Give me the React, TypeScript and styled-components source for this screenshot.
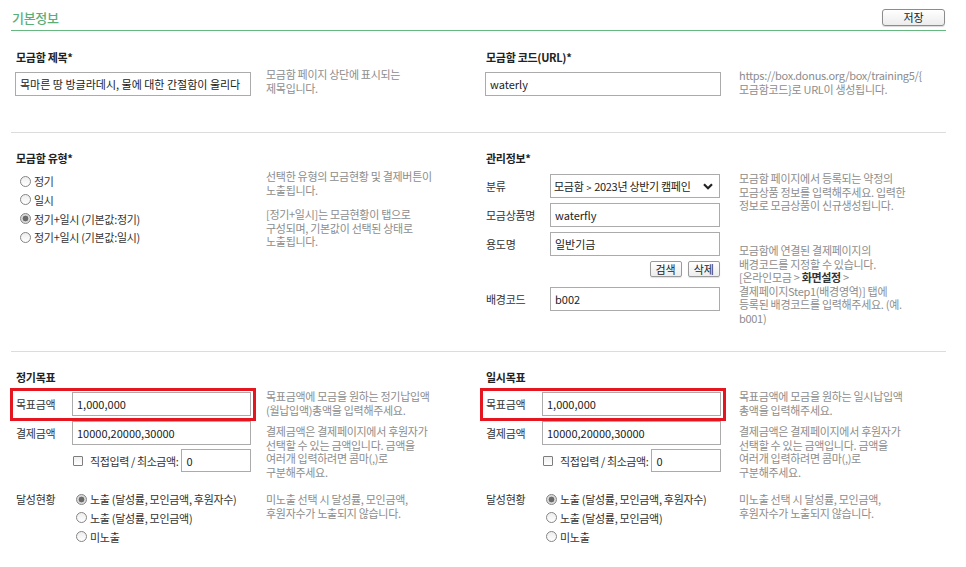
import React from 'react';
import styled, { createGlobalStyle } from 'styled-components';

const GlobalStyle = createGlobalStyle`
  body {
    margin: 0;
    background: #fff;
    font-family: "Noto Sans CJK KR", "Noto Sans", sans-serif;
    font-size: 11px;
    letter-spacing: -0.3px;
    color: #333;
  }
  * { box-sizing: border-box; }
`;

const Page = styled.div`
  width: 935px;
  margin-left: 11px;
`;

const Header = styled.div`
  display: flex;
  justify-content: space-between;
  align-items: flex-start;
  height: 31px;
  border-bottom: 1px solid #66b780;
`;

const Title = styled.h2`
  margin: 11px 0 0 1px;
  font-size: 13px;
  line-height: 14px;
  font-weight: 500;
  color: #5cae77;
`;

const SaveButton = styled.button`
  margin: 9px 1px 0 0;
  width: 63px;
  height: 17px;
  padding: 0;
  font: inherit;
  font-size: 11px;
  line-height: 15px;
  color: #222;
  border: 1px solid #8c8c8c;
  border-radius: 3px;
  background: linear-gradient(#ffffff, #ececec);
  box-shadow: 0 1px 1px rgba(0, 0, 0, 0.15);
`;

const Section = styled.section<{ $top: number; $bottom: number; $last?: boolean }>`
  display: grid;
  grid-template-columns: 470px 1fr;
  padding: ${p => p.$top}px 0 ${p => p.$bottom}px 4px;
  border-bottom: ${p => (p.$last ? 'none' : '1px solid #dcdcdc')};
`;

const Column = styled.div`
  display: flex;
  flex-direction: column;
`;

const GroupLabel = styled.h3<{ $mb: number }>`
  margin: 0 0 ${p => p.$mb}px 1px;
  font-size: 11px;
  line-height: 14px;
  font-weight: 700;
  color: #222;
`;

const Pair = styled.div<{ $gap?: number; $mt?: number }>`
  display: grid;
  grid-template-columns: 236px auto;
  column-gap: ${p => p.$gap ?? 15}px;
  margin-top: ${p => p.$mt ?? 0}px;
  align-items: start;
`;

const Help = styled.div<{ $mt?: number }>`
  margin-top: ${p => p.$mt ?? 0}px;
  color: #8d8d8d;
  line-height: 13.5px;
  white-space: nowrap;

  b {
    color: #333;
    font-weight: 700;
  }
`;

const HelpPara = styled.p<{ $mt?: number }>`
  margin: ${p => p.$mt ?? 0}px 0 0;
`;

const TextInput = styled.input<{ $w?: number; $h?: number }>`
  width: ${p => (p.$w ? `${p.$w}px` : '100%')};
  height: ${p => p.$h ?? 24}px;
  margin: 0;
  padding: 0 4px;
  border: 1px solid #ababab;
  border-radius: 0;
  font: inherit;
  font-size: 11px;
  color: #222;
  background: #fff;
  outline: none;
`;

const RadioList = styled.div<{ $pl: number }>`
  display: flex;
  flex-direction: column;
  padding-left: ${p => p.$pl}px;
`;

const RadioRow = styled.label`
  display: flex;
  align-items: center;
  gap: 3px;
  height: 18.67px;
  color: #333;
`;

const RadioDot = styled.span<{ $on?: boolean }>`
  width: 11px;
  height: 11px;
  border-radius: 50%;
  border: 1px solid #858585;
  background: ${p =>
    p.$on
      ? 'radial-gradient(circle, #6a6a6a 0 2.6px, #d9d9d9 3.2px)'
      : 'linear-gradient(#eeeeee, #ffffff)'};
  flex: none;
`;

const Radio = ({ label, on }: { label: string; on?: boolean }) => (
  <RadioRow>
    <RadioDot $on={on} />
    <span>{label}</span>
  </RadioRow>
);

/* 관리정보 form */
const ManageForm = styled.div`
  display: flex;
  flex-direction: column;
  gap: 5px;
  margin-top: 2px;
`;

const FormRow = styled.div<{ $mt?: number }>`
  display: grid;
  grid-template-columns: 65px 170px;
  align-items: center;
  margin-top: ${p => p.$mt ?? 0}px;
`;

const RowLabel = styled.span`
  padding-left: 1px;
  color: #333;
`;

const SelectBox = styled.div`
  display: flex;
  align-items: center;
  justify-content: space-between;
  height: 24px;
  padding: 0 6px 0 3px;
  border: 1px solid #ababab;
  color: #222;

  small {
    font-size: 9px;
    margin: 0 3px;
  }
`;

const ButtonBar = styled.div`
  display: flex;
  justify-content: flex-end;
  gap: 6px;
  grid-column: 2;
`;

const SmallButton = styled.button`
  height: 16px;
  padding: 0 5px;
  font: inherit;
  font-size: 11px;
  line-height: 14px;
  color: #222;
  border: 1px solid #9a9a9a;
  border-radius: 2px;
  background: linear-gradient(#ffffff, #ededed);
  box-shadow: 0 1px 1px rgba(0, 0, 0, 0.12);
`;

/* 목표 rows */
const FieldRow = styled.div<{ $hl?: boolean; $align?: string }>`
  position: relative;
  display: grid;
  grid-template-columns: 57px 1fr;
  align-items: ${p => p.$align ?? 'center'};

  ${p =>
    p.$hl &&
    `&::after {
      content: '';
      position: absolute;
      inset: -4px -5px -5px -5px;
      border: 3px solid #e5161f;
      pointer-events: none;
    }`}
`;

const FieldName = styled.span<{ $lh?: number }>`
  padding-left: 1px;
  color: #333;
  line-height: ${p => (p.$lh ? `${p.$lh}px` : 'normal')};
`;

const FieldStack = styled.div`
  display: flex;
  flex-direction: column;
`;

const CheckRow = styled.div`
  display: flex;
  align-items: center;
  margin: 4px 0 0 57px;
  color: #333;
  white-space: nowrap;

  span {
    letter-spacing: -0.4px;
  }
`;

const CheckBox = styled.i`
  width: 10px;
  height: 10px;
  margin: 0 7px 0 1px;
  border: 1px solid #7d7d7d;
  border-radius: 1px;
  background: linear-gradient(#f0f0f0, #ffffff);
  flex: none;
`;

const MinInput = styled(TextInput)`
  flex: none;
  margin-left: 3px;
`;

const Lines = ({ lines }: { lines: React.ReactNode[] }) => (
  <>
    {lines.map((l, i) => (
      <React.Fragment key={i}>
        {l}
        {i < lines.length - 1 && <br />}
      </React.Fragment>
    ))}
  </>
);

const payHelp = [
  '결제금액은 결제페이지에서 후원자가',
  '선택할 수 있는 금액입니다. 금액을',
  '여러개 입력하려면 콤마(,)로',
  '구분해주세요.',
];

const showHelp = ['미노출 선택 시 달성률, 모인금액,', '후원자수가 노출되지 않습니다.'];

type GoalProps = { title: string; goalHelp: string[]; gap?: number };

const GoalColumn = ({ title, goalHelp, gap }: GoalProps) => (
  <Column>
    <GroupLabel $mb={8}>{title}</GroupLabel>
    <Pair $gap={gap}>
      <FieldRow $hl>
        <FieldName>목표금액</FieldName>
        <TextInput defaultValue="1,000,000" />
      </FieldRow>
      <Help $mt={-2}>
        <Lines lines={goalHelp} />
      </Help>
    </Pair>
    <Pair $gap={gap} $mt={4}>
      <FieldStack>
        <FieldRow>
          <FieldName>결제금액</FieldName>
          <TextInput defaultValue="10000,20000,30000" />
        </FieldRow>
        <CheckRow>
          <CheckBox />
          <span>직접입력 / 최소금액:</span>
          <MinInput defaultValue="0" $w={70} $h={23} />
        </CheckRow>
      </FieldStack>
      <Help $mt={4}>
        <Lines lines={payHelp} />
      </Help>
    </Pair>
    <Pair $gap={gap} $mt={11}>
      <FieldRow $align="start">
        <FieldName $lh={18.67}>달성현황</FieldName>
        <RadioList $pl={4}>
          <Radio label="노출 (달성률, 모인금액, 후원자수)" on />
          <Radio label="노출 (달성률, 모인금액)" />
          <Radio label="미노출" />
        </RadioList>
      </FieldRow>
      <Help $mt={3}>
        <Lines lines={showHelp} />
      </Help>
    </Pair>
  </Column>
);

const Chevron = () => (
  <svg width="10" height="7" viewBox="0 0 10 7">
    <path d="M1 1.2 L5 5.2 L9 1.2" fill="none" stroke="#222" strokeWidth="2.2" />
  </svg>
);

export default function App() {
  return (
    <Page>
      <GlobalStyle />
      <Header>
        <Title>기본정보</Title>
        <SaveButton>저장</SaveButton>
      </Header>

      <Section $top={19} $bottom={36}>
        <Column>
          <GroupLabel $mb={8}>모금함 제목*</GroupLabel>
          <Pair>
            <TextInput defaultValue="목마른 땅 방글라데시, 물에 대한 간절함이 울리다" />
            <Help $mt={-4}>
              <Lines lines={['모금함 페이지 상단에 표시되는', '제목입니다.']} />
            </Help>
          </Pair>
        </Column>
        <Column>
          <GroupLabel $mb={8}>모금함 코드(URL)*</GroupLabel>
          <Pair $gap={18}>
            <TextInput defaultValue="waterly" />
            <Help $mt={-3}>
              <Lines lines={['https://box.donus.org/box/training5/{', '모금함코드}로 URL이 생성됩니다.']} />
            </Help>
          </Pair>
        </Column>
      </Section>

      <Section $top={18} $bottom={26}>
        <Column>
          <GroupLabel $mb={7}>모금함 유형*</GroupLabel>
          <Pair>
            <RadioList $pl={5}>
              <Radio label="정기" />
              <Radio label="일시" />
              <Radio label="정기+일시 (기본값:정기)" on />
              <Radio label="정기+일시 (기본값:일시)" />
            </RadioList>
            <Help $mt={-2}>
              <HelpPara>
                <Lines lines={['선택한 유형의 모금현황 및 결제버튼이', '노출됩니다.']} />
              </HelpPara>
              <HelpPara $mt={11}>
                <Lines lines={['[정기+일시]는 모금현황이 탭으로', '구성되며, 기본값이 선택된 상태로', '노출됩니다.']} />
              </HelpPara>
            </Help>
          </Pair>
        </Column>
        <Column>
          <GroupLabel $mb={7}>관리정보*</GroupLabel>
          <Pair $gap={18}>
            <ManageForm>
              <FormRow>
                <RowLabel>분류</RowLabel>
                <SelectBox role="combobox">
                  <span>
                    모금함<small>&gt;</small>2023년 상반기 캠페인
                  </span>
                  <Chevron />
                </SelectBox>
              </FormRow>
              <FormRow>
                <RowLabel>모금상품명</RowLabel>
                <TextInput defaultValue="waterfly" />
              </FormRow>
              <FormRow>
                <RowLabel>용도명</RowLabel>
                <TextInput defaultValue="일반기금" />
              </FormRow>
              <FormRow>
                <ButtonBar>
                  <SmallButton>검색</SmallButton>
                  <SmallButton>삭제</SmallButton>
                </ButtonBar>
              </FormRow>
              <FormRow $mt={5}>
                <RowLabel>배경코드</RowLabel>
                <TextInput defaultValue="b002" />
              </FormRow>
            </ManageForm>
            <Help>
              <HelpPara>
                <Lines
                  lines={[
                    '모금함 페이지에서 등록되는 약정의',
                    '모금상품 정보를 입력해주세요. 입력한',
                    '정보로 모금상품이 신규생성됩니다.',
                  ]}
                />
              </HelpPara>
              <HelpPara $mt={31.5}>
                <Lines
                  lines={[
                    '모금함에 연결된 결제페이지의',
                    '배경코드를 지정할 수 있습니다.',
                    <>
                      [온라인모금 &gt; <b>화면설정</b> &gt;
                    </>,
                    '결제페이지Step1(배경영역)] 탭에',
                    '등록된 배경코드를 입력해주세요. (예.',
                    'b001)',
                  ]}
                />
              </HelpPara>
            </Help>
          </Pair>
        </Column>
      </Section>

      <Section $top={18} $bottom={20} $last>
        <GoalColumn title="정기목표" goalHelp={['목표금액에 모금을 원하는 정기납입액', '(월납입액)총액을 입력해주세요.']} />
        <GoalColumn title="일시목표" goalHelp={['목표금액에 모금을 원하는 일시납입액', '총액을 입력해주세요.']} gap={18} />
      </Section>
    </Page>
  );
}
